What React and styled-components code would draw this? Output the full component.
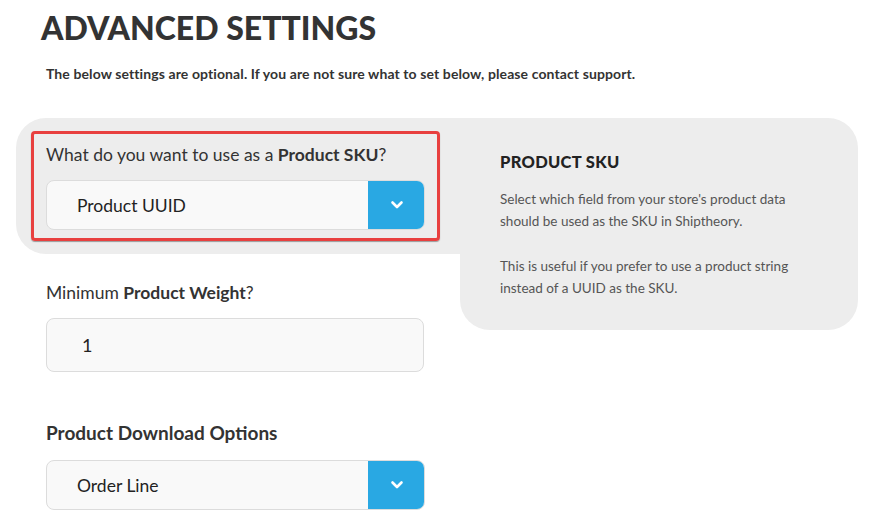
import React from 'react';
import styled, { createGlobalStyle } from 'styled-components';

const GlobalStyle = createGlobalStyle`
  body {
    margin: 0;
    background: #ffffff;
    font-family: Lato, "Liberation Sans", sans-serif;
    color: #333333;
  }
`;

const Page = styled.div`
  padding: 10px 21px 0 16px;
`;

const Title = styled.h1`
  margin: 0 0 0 25px;
  font-size: 32px;
  font-weight: 900;
  letter-spacing: 0;
  color: #333;
  line-height: 36px;
`;

const Intro = styled.p`
  margin: 19px 0 0 30px;
  font-size: 14px;
  font-weight: 700;
  letter-spacing: 0.1px;
  color: #333;
`;

const Content = styled.div`
  display: flex;
  margin-top: 36px;
  align-items: flex-start;
`;

const LeftColumn = styled.div`
  width: 444px;
  flex-shrink: 0;
`;

const Highlight = styled.div`
  background: #ededed;
  border-radius: 30px 0 0 30px;
  padding: 13px 20px 13px 15px;
`;

const Focused = styled.div`
  border: 3px solid #e8403f;
  border-radius: 4px;
  padding: 10px 12px 8px 12px;
  box-shadow: 0 1px 1px rgba(0, 0, 0, 0.35);
`;

const Field = styled.div`
  padding: 0 0 0 30px;
  margin-top: ${p => p.$top || 0}px;
`;

const Label = styled.div`
  font-size: ${p => (p.$bold ? 19 : 17.5)}px;
  font-weight: ${p => (p.$bold ? 700 : 400)};
  color: #333;
  line-height: 22px;
  margin-bottom: ${p => p.$gap || 14}px;

  b {
    font-weight: 700;
  }
`;

const SelectBox = styled.div`
  display: flex;
  width: 379px;
  height: 50px;
  border-radius: 8px;
  overflow: hidden;
  background: #f9f9f9;
  border: 1px solid #dcdcdc;
  box-sizing: border-box;
`;

const SelectValue = styled.div`
  flex: 1;
  display: flex;
  align-items: center;
  padding-left: 30px;
  font-size: 17.5px;
  color: #222;
`;

const SelectButton = styled.div`
  width: 57px;
  background: #29a8e3;
  display: flex;
  align-items: center;
  justify-content: center;
  margin: -1px -1px -1px 0;
`;

const InputBox = styled.div`
  width: 378px;
  height: 54px;
  border-radius: 8px;
  background: #f9f9f9;
  border: 1px solid #dcdcdc;
  box-sizing: border-box;
  display: flex;
  align-items: center;
  padding-left: 35px;
  font-size: 18px;
  color: #222;
`;

const InfoPanel = styled.div`
  width: 398px;
  height: 212px;
  box-sizing: border-box;
  background: #ededed;
  border-radius: 0 30px 30px 30px;
  padding: 34px 40px 0 40px;
`;

const InfoTitle = styled.h3`
  margin: 0 0 16px;
  font-size: 16.5px;
  font-weight: 900;
  color: #222;
  letter-spacing: 0.3px;
`;

const InfoText = styled.p`
  margin: 0 0 23px;
  font-size: 13.5px;
  line-height: 22px;
  color: #555;
`;

const Chevron = () => (
  <svg width="14" height="10" viewBox="0 0 14 10">
    <path d="M2.5 2.5 L7 7 L11.5 2.5" fill="none" stroke="#fff" strokeWidth="2.6" strokeLinecap="round" strokeLinejoin="round" />
  </svg>
);

const Select = ({ value }) => (
  <SelectBox>
    <SelectValue>{value}</SelectValue>
    <SelectButton>
      <Chevron />
    </SelectButton>
  </SelectBox>
);

export default function App() {
  return (
    <Page>
      <GlobalStyle />
      <Title>ADVANCED SETTINGS</Title>
      <Intro>The below settings are optional. If you are not sure what to set below, please contact support.</Intro>
      <Content>
        <LeftColumn>
          <Highlight>
            <Focused>
              <Label>What do you want to use as a <b>Product SKU</b>?</Label>
              <Select value="Product UUID" />
            </Focused>
          </Highlight>
          <Field $top={28}>
            <Label>Minimum <b>Product Weight</b>?</Label>
            <InputBox>1</InputBox>
          </Field>
          <Field $top={50}>
            <Label $bold $gap={16}>Product Download Options</Label>
            <Select value="Order Line" />
          </Field>
        </LeftColumn>
        <InfoPanel>
          <InfoTitle>PRODUCT SKU</InfoTitle>
          <InfoText>
            Select which field from your store's product data<br />
            should be used as the SKU in Shiptheory.
          </InfoText>
          <InfoText>
            This is useful if you prefer to use a product string<br />
            instead of a UUID as the SKU.
          </InfoText>
        </InfoPanel>
      </Content>
    </Page>
  );
}
